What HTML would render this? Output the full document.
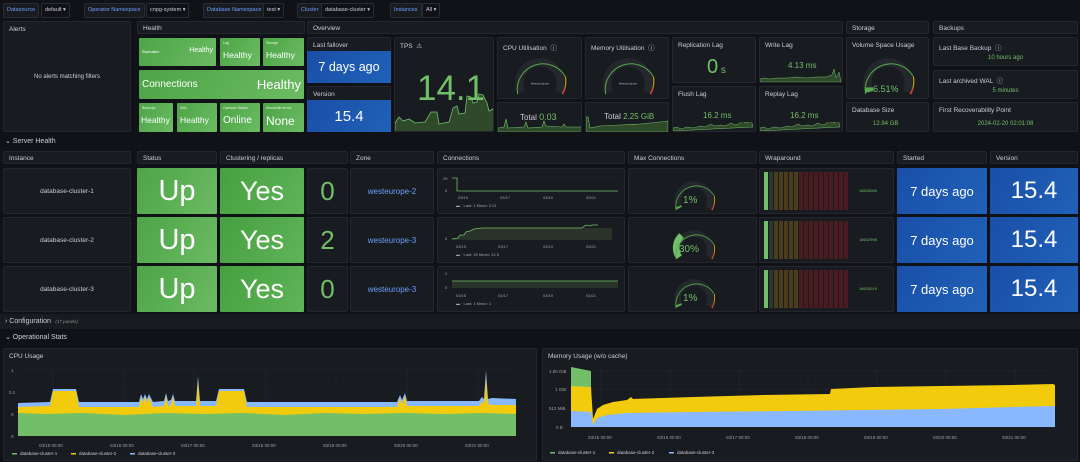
<!DOCTYPE html><html><head><meta charset="utf-8"><style>
*{box-sizing:border-box;margin:0;padding:0}
body{width:1080px;height:462px;background:#111217;font-family:"Liberation Sans",sans-serif;color:#ccccdc;position:relative;overflow:hidden}
.a{position:absolute}
.p{position:absolute;background:#181b1f;border:1px solid #24272d;border-radius:2px}
.t{position:absolute;left:5px;top:4px;font-size:6.5px;color:#ccccdc;white-space:nowrap}
.var{position:absolute;top:3px;height:15px;font-size:5.5px;line-height:13px;border:1px solid #2a2d33;border-radius:2px;padding:0 3px;white-space:nowrap}
.vl{color:#6e9fff;background:#181b1f}
.vv{color:#ccccdc;background:#111217}
.g{position:absolute;background:linear-gradient(120deg,#4da446,#6bbb62);color:#fff;border-radius:1px}
.b{position:absolute;background:linear-gradient(120deg,#1a4fa8,#2061b8);color:#fff;display:flex;align-items:center;justify-content:center}
.gt{position:absolute;left:3px;top:3px;font-size:3.5px;color:#e8f5e6}
.c{display:flex;align-items:center;justify-content:center}
.grn{color:#73bf69}
.row{position:absolute;left:0;width:1080px;font-size:7px;color:#ccccdc;padding-left:5px}
</style></head><body>

<div class="var vl" style="left:3px">Datasource</div><div class="var vv" style="left:41px">default ▾</div>
<div class="var vl" style="left:84px">Operator Namespace</div><div class="var vv" style="left:146px">cnpg-system ▾</div>
<div class="var vl" style="left:203px">Database Namespace</div><div class="var vv" style="left:263px">test ▾</div>
<div class="var vl" style="left:297px">Cluster</div><div class="var vv" style="left:321px">database-cluster ▾</div>
<div class="var vl" style="left:390px">Instances</div><div class="var vv" style="left:422px">All ▾</div>

<div class="p" style="left:3px;top:21px;width:128px;height:111px"><div class="t">Alerts</div><div class="a c" style="left:0;top:0;width:126px;height:109px;font-size:6px">No alerts matching filters</div></div>

<div class="p" style="left:137px;top:21px;width:168px;height:13px"><div class="t" style="top:3px">Health</div></div>
<div class="g" style="left:139px;top:38px;width:77px;height:28px"><span class="a" style="left:3px;top:12px;font-size:3.5px">Replication</span><span class="a" style="right:3px;top:9px;font-size:7px">Healthy</span></div>
<div class="g" style="left:220px;top:38px;width:40px;height:28px"><span class="gt">Lag</span><span class="a" style="left:3px;top:12px;font-size:8.5px">Healthy</span></div>
<div class="g" style="left:263px;top:38px;width:41px;height:28px"><span class="gt">Storage</span><span class="a" style="left:3px;top:12px;font-size:8.5px">Healthy</span></div>
<div class="g" style="left:139px;top:70px;width:165px;height:29px"><span class="a" style="left:3px;top:9px;font-size:10px">Connections</span><span class="a" style="right:3px;top:7px;font-size:13px">Healthy</span></div>
<div class="g" style="left:139px;top:103px;width:34px;height:29px"><span class="gt">Backups</span><span class="a" style="left:2px;top:12px;font-size:8.5px">Healthy</span></div>
<div class="g" style="left:177px;top:103px;width:40px;height:29px"><span class="gt">WAL</span><span class="a" style="left:3px;top:12px;font-size:8.5px">Healthy</span></div>
<div class="g" style="left:220px;top:103px;width:40px;height:29px"><span class="gt">Operator Status</span><span class="a" style="left:3px;top:12px;font-size:10px">Online</span></div>
<div class="g" style="left:263px;top:103px;width:41px;height:29px"><span class="gt">Reconcile errors</span><span class="a" style="left:3px;top:11px;font-size:12px">None</span></div>

<div class="p" style="left:307px;top:21px;width:536px;height:13px"><div class="t" style="top:3px">Overview</div></div>
<div class="p" style="left:307px;top:37px;width:84px;height:46px"><div class="t">Last fallover</div></div>
<div class="b" style="left:307px;top:51px;width:84px;height:32px;font-size:12.5px">7 days ago</div>
<div class="p" style="left:307px;top:86px;width:84px;height:46px"><div class="t">Version</div></div>
<div class="b" style="left:307px;top:100px;width:84px;height:32px;font-size:15px">15.4</div>

<div class="p" style="left:394px;top:37px;width:100px;height:95px;overflow:hidden"><div class="t">TPS &nbsp;⚠</div>
<svg class="a" style="left:0;top:55px" width="98" height="39"><path d="M0 39V30l4-6 4 4 6-2 6 4 10-1 6-10h6l2 12 10-2 4-14 4-2 2 8 6-1 2-17 4 1 2 6 4-1 2-8 4 1 4 8 2 8 4-2 2 6 4-1v19z" fill="#2e4a2a" stroke="#73bf69" stroke-width=".8"/></svg>
<div class="a grn" style="left:22px;top:33px;font-size:35px;line-height:36px">14.1</div></div>

<div class="p" style="left:497px;top:37px;width:85px;height:62px"><div class="t">CPU Utilisation &nbsp;ⓘ</div>
<svg class="a" style="left:11px;top:12px" width="62" height="48" viewBox="0 0 60 46"><path d="M12 40.3A20 20 0 1 1 48 40.3" fill="none" stroke="#24272c" stroke-width="8"/><path d="M8.35 42.5A25 25 0 0 1 54.62 25.66" fill="none" stroke="#56a64b" stroke-width="1"/><path d="M54.62 25.66A25 25 0 0 1 54.15 36.47" fill="none" stroke="#e0b400" stroke-width="1"/><path d="M54.15 36.47A25 25 0 0 1 51.65 42.5" fill="none" stroke="#d44a3a" stroke-width="1.5"/><text x="30" y="33" font-size="2.5" fill="#bbb" text-anchor="middle">Missing request</text></svg></div>
<div class="p" style="left:497px;top:102px;width:85px;height:30px">
<svg class="a" style="left:0;top:12px" width="83" height="17"><path d="M0 17V13l6-1 2-8 2 9 16-1 2-5 2 6 14-1 2-6 2 5 16 1 2-3 2 3 17 0v5z" fill="#2e4a2a" stroke="#73bf69" stroke-width=".6"/></svg>
<div class="a" style="left:22px;top:9px;font-size:8px">Total <span class="grn" style="font-size:9px">0.03</span></div></div>

<div class="p" style="left:585px;top:37px;width:84px;height:62px"><div class="t">Memory Utilisation &nbsp;ⓘ</div>
<svg class="a" style="left:11px;top:12px" width="62" height="48" viewBox="0 0 60 46"><path d="M12 40.3A20 20 0 1 1 48 40.3" fill="none" stroke="#24272c" stroke-width="8"/><path d="M8.35 42.5A25 25 0 0 1 54.62 25.66" fill="none" stroke="#56a64b" stroke-width="1"/><path d="M54.62 25.66A25 25 0 0 1 54.15 36.47" fill="none" stroke="#e0b400" stroke-width="1"/><path d="M54.15 36.47A25 25 0 0 1 51.65 42.5" fill="none" stroke="#d44a3a" stroke-width="1.5"/><text x="30" y="33" font-size="2.5" fill="#bbb" text-anchor="middle">Missing request</text></svg></div>
<div class="p" style="left:585px;top:102px;width:84px;height:30px">
<svg class="a" style="left:0;top:10px" width="82" height="19"><path d="M0 19V4l2 0 2 11 10-2 20-1 20-1 20-2 8-1v11z" fill="#2e4a2a" stroke="#73bf69" stroke-width=".6"/></svg>
<div class="a" style="left:18px;top:9px;font-size:8px">Total <span class="grn" style="font-size:8px">2.25 GiB</span></div></div>

<div class="p" style="left:672px;top:37px;width:84px;height:46px"><div class="t">Replication Lag</div><div class="a grn" style="left:34px;top:18px;font-size:20px">0<span style="font-size:10px"> s</span></div></div>
<div class="p" style="left:672px;top:86px;width:84px;height:46px"><div class="t">Flush Lag</div><div class="a grn" style="left:30px;top:24px;font-size:8px">16.2 ms</div>
<svg class="a" style="left:0;top:35px" width="82" height="9"><path d="M0 9V6l4-1 4 2 6-2 6 1 8-2 4 1 6-3 4 2 6-1 4 1 6-3 4 2 4-1 4-6 2 5 4-1 2-3 2 8z" fill="#2e4a2a" stroke="#73bf69" stroke-width=".5"/></svg></div>
<div class="p" style="left:759px;top:37px;width:84px;height:46px"><div class="t">Write Lag</div><div class="a grn" style="left:28px;top:23px;font-size:8px">4.13 ms</div>
<svg class="a" style="left:0;top:30px" width="82" height="14"><path d="M0 14V11l4-1 6 1 8-1 10 0 8-1 10 1 10-1 10 0 6-2 2-6 2 9 3-6 2 10z" fill="#2e4a2a" stroke="#73bf69" stroke-width=".5"/></svg></div>
<div class="p" style="left:759px;top:86px;width:84px;height:46px"><div class="t">Replay Lag</div><div class="a grn" style="left:30px;top:24px;font-size:8px">16.2 ms</div>
<svg class="a" style="left:0;top:35px" width="82" height="9"><path d="M0 9V6l4-1 4 2 6-2 6 1 8-2 4 1 6-3 4 2 6-1 4 1 6-3 4 2 4-1 4-6 2 5 4-1 2-3 2 8z" fill="#2e4a2a" stroke="#73bf69" stroke-width=".5"/></svg></div>

<div class="p" style="left:846px;top:21px;width:83px;height:13px"><div class="t" style="top:3px">Storage</div></div>
<div class="p" style="left:846px;top:37px;width:83px;height:62px"><div class="t">Volume Space Usage</div>
<svg class="a" style="left:10px;top:12px" width="62" height="48" viewBox="0 0 60 46"><path d="M12 40.3A20 20 0 1 1 48 40.3" fill="none" stroke="#24272c" stroke-width="8"/><path d="M12 40.3A20 20 0 0 1 11.5 36" fill="none" stroke="#56a64b" stroke-width="8"/><path d="M8.35 42.5A25 25 0 0 1 54.62 25.66" fill="none" stroke="#56a64b" stroke-width="1"/><path d="M54.62 25.66A25 25 0 0 1 54.15 36.47" fill="none" stroke="#e0b400" stroke-width="1"/><path d="M54.15 36.47A25 25 0 0 1 51.65 42.5" fill="none" stroke="#d44a3a" stroke-width="1.5"/></svg>
<div class="a grn" style="left:26px;top:46px;font-size:9px">6.51%</div></div>
<div class="p" style="left:846px;top:102px;width:83px;height:30px"><div class="t">Database Size</div><div class="a grn" style="left:26px;top:18px;font-size:6px">12.94 GB</div></div>

<div class="p" style="left:933px;top:21px;width:145px;height:13px"><div class="t" style="top:3px">Backups</div></div>
<div class="p" style="left:933px;top:37px;width:145px;height:29px"><div class="t">Last Base Backup &nbsp;ⓘ</div><div class="a grn" style="left:0;width:143px;text-align:center;top:17px;font-size:6px">10 hours ago</div></div>
<div class="p" style="left:933px;top:70px;width:145px;height:29px"><div class="t">Last archived WAL &nbsp;ⓘ</div><div class="a grn" style="left:0;width:143px;text-align:center;top:17px;font-size:6px">5 minutes</div></div>
<div class="p" style="left:933px;top:102px;width:145px;height:30px"><div class="t">First Recoverability Point</div><div class="a grn" style="left:0;width:143px;text-align:center;top:18px;font-size:6px">2024-02-20 02:01:08</div></div>

<div class="row" style="top:137px">⌄ Server Health</div>
<div class="p" style="left:3px;top:151px;width:128px;height:13px"><div class="t" style="top:3px">Instance</div></div>
<div class="p" style="left:137px;top:151px;width:80px;height:13px"><div class="t" style="top:3px">Status</div></div>
<div class="p" style="left:220px;top:151px;width:128px;height:13px"><div class="t" style="top:3px">Clustering / replicas</div></div>
<div class="p" style="left:350px;top:151px;width:84px;height:13px"><div class="t" style="top:3px">Zone</div></div>
<div class="p" style="left:437px;top:151px;width:188px;height:13px"><div class="t" style="top:3px">Connections</div></div>
<div class="p" style="left:628px;top:151px;width:129px;height:13px"><div class="t" style="top:3px">Max Connections</div></div>
<div class="p" style="left:759px;top:151px;width:135px;height:13px"><div class="t" style="top:3px">Wraparound</div></div>
<div class="p" style="left:897px;top:151px;width:90px;height:13px"><div class="t" style="top:3px">Started</div></div>
<div class="p" style="left:990px;top:151px;width:88px;height:13px"><div class="t" style="top:3px">Version</div></div>

<!-- row 1 -->
<div class="p c" style="left:3px;top:168px;width:128px;height:46px;font-size:6.5px">database-cluster-1</div>
<div class="g c" style="left:137px;top:168px;width:80px;height:46px;font-size:29px">Up</div>
<div class="g c" style="left:220px;top:168px;width:84px;height:46px;font-size:27px;background:linear-gradient(120deg,#46a040,#5fb457)">Yes</div>
<div class="p c grn" style="left:307px;top:168px;width:41px;height:46px;font-size:26px">0</div>
<div class="p c" style="left:350px;top:168px;width:84px;height:46px;font-size:8px;color:#6e9fff">westeurope-2</div>
<div class="p" style="left:437px;top:168px;width:188px;height:46px"><svg width="186" height="44"><text x="5" y="11" font-size="4" fill="#9fa0a6">25</text><text x="7" y="23" font-size="4" fill="#9fa0a6">0</text><line x1="14" y1="9" x2="180" y2="9" stroke="#262930" stroke-width=".5"/><line x1="14" y1="22" x2="180" y2="22" stroke="#262930" stroke-width=".5"/><path d="M14 9H19V22H180" fill="none" stroke="#73bf69" stroke-width=".8"/><g font-size="4" fill="#9fa0a6"><text x="20" y="30">03/15</text><text x="62" y="30">03/17</text><text x="105" y="30">03/19</text><text x="148" y="30">03/21</text><text x="18" y="38">▬ · Last: 1  Mean: 2.01</text></g></svg></div>
<div class="p" style="left:628px;top:168px;width:129px;height:46px"><svg class="a" style="left:40px;top:6px" width="50" height="38" viewBox="0 0 60 46"><path d="M12 40.3A20 20 0 1 1 48 40.3" fill="none" stroke="#24272c" stroke-width="8"/><path d="M12 40.3A20 20 0 0 1 11 38" fill="none" stroke="#56a64b" stroke-width="8"/><path d="M8.35 42.5A25 25 0 0 1 54.62 25.66" fill="none" stroke="#56a64b" stroke-width="1"/><path d="M54.62 25.66A25 25 0 0 1 54.15 36.47" fill="none" stroke="#e0b400" stroke-width="1"/><path d="M54.15 36.47A25 25 0 0 1 51.65 42.5" fill="none" stroke="#d44a3a" stroke-width="1.5"/></svg><div class="a grn" style="left:54px;top:26px;font-size:10px">1%</div></div>
<div class="p" style="left:759px;top:168px;width:135px;height:46px"><svg class="a" style="left:4px;top:3px" width="90" height="40"><rect x="0" width="4" height="38" fill="#73bf69"/><rect x="5" width="4" height="38" fill="#2f3530"/><g fill="#4b3d1c"><rect x="10" width="4" height="38"/><rect x="15" width="4" height="38"/><rect x="20" width="4" height="38"/><rect x="25" width="4" height="38"/><rect x="30" width="4" height="38"/></g><g fill="#4a1c20"><rect x="35" width="4" height="38"/><rect x="40" width="4" height="38"/><rect x="45" width="4" height="38"/><rect x="50" width="4" height="38"/><rect x="55" width="4" height="38"/><rect x="60" width="4" height="38"/><rect x="65" width="4" height="38"/><rect x="70" width="4" height="38"/><rect x="75" width="4" height="38"/><rect x="80" width="4" height="38"/></g></svg><div class="a grn" style="left:99px;top:19px;font-size:4px">18633065</div></div>
<div class="b" style="left:897px;top:168px;width:90px;height:46px;font-size:13px">7 days ago</div>
<div class="b" style="left:990px;top:168px;width:88px;height:46px;font-size:24px">15.4</div>

<!-- row 2 -->
<div class="p c" style="left:3px;top:217px;width:128px;height:46px;font-size:6.5px">database-cluster-2</div>
<div class="g c" style="left:137px;top:217px;width:80px;height:46px;font-size:29px">Up</div>
<div class="g c" style="left:220px;top:217px;width:84px;height:46px;font-size:27px;background:linear-gradient(120deg,#46a040,#5fb457)">Yes</div>
<div class="p c grn" style="left:307px;top:217px;width:41px;height:46px;font-size:26px">2</div>
<div class="p c" style="left:350px;top:217px;width:84px;height:46px;font-size:8px;color:#6e9fff">westeurope-3</div>
<div class="p" style="left:437px;top:217px;width:188px;height:46px"><svg width="186" height="44"><text x="7" y="22" font-size="4" fill="#9fa0a6">0</text><path d="M14 21l6-1 2-3h4l2-3 4-1 4-2 8-1h130v12H14z" fill="#2a3329"/><path d="M14 21l6-1 2-3h4l2-3 4-1 4-2 8-1h100l4-3 4 1 2-1h6" fill="none" stroke="#73bf69" stroke-width=".8"/><g font-size="4" fill="#9fa0a6"><text x="18" y="30">03/15</text><text x="60" y="30">03/17</text><text x="105" y="30">03/19</text><text x="148" y="30">03/21</text><text x="18" y="38">▬ · Last: 30  Mean: 24.5</text></g></svg></div>
<div class="p" style="left:628px;top:217px;width:129px;height:46px"><svg class="a" style="left:40px;top:6px" width="50" height="38" viewBox="0 0 60 46"><path d="M12 40.3A20 20 0 1 1 48 40.3" fill="none" stroke="#24272c" stroke-width="8"/><path d="M12 40.3A20 20 0 0 1 15 14" fill="none" stroke="#73bf69" stroke-width="8"/><path d="M8.35 42.5A25 25 0 0 1 54.62 25.66" fill="none" stroke="#56a64b" stroke-width="1"/><path d="M54.62 25.66A25 25 0 0 1 54.15 36.47" fill="none" stroke="#e0b400" stroke-width="1"/><path d="M54.15 36.47A25 25 0 0 1 51.65 42.5" fill="none" stroke="#d44a3a" stroke-width="1.5"/></svg><div class="a grn" style="left:50px;top:26px;font-size:10px">30%</div></div>
<div class="p" style="left:759px;top:217px;width:135px;height:46px"><svg class="a" style="left:4px;top:3px" width="90" height="40"><rect x="0" width="4" height="38" fill="#73bf69"/><rect x="5" width="4" height="38" fill="#2f3530"/><g fill="#4b3d1c"><rect x="10" width="4" height="38"/><rect x="15" width="4" height="38"/><rect x="20" width="4" height="38"/><rect x="25" width="4" height="38"/><rect x="30" width="4" height="38"/></g><g fill="#4a1c20"><rect x="35" width="4" height="38"/><rect x="40" width="4" height="38"/><rect x="45" width="4" height="38"/><rect x="50" width="4" height="38"/><rect x="55" width="4" height="38"/><rect x="60" width="4" height="38"/><rect x="65" width="4" height="38"/><rect x="70" width="4" height="38"/><rect x="75" width="4" height="38"/><rect x="80" width="4" height="38"/></g></svg><div class="a grn" style="left:99px;top:19px;font-size:4px">18632998</div></div>
<div class="b" style="left:897px;top:217px;width:90px;height:46px;font-size:13px">7 days ago</div>
<div class="b" style="left:990px;top:217px;width:88px;height:46px;font-size:24px">15.4</div>

<!-- row 3 -->
<div class="p c" style="left:3px;top:266px;width:128px;height:46px;font-size:6.5px">database-cluster-3</div>
<div class="g c" style="left:137px;top:266px;width:80px;height:46px;font-size:29px">Up</div>
<div class="g c" style="left:220px;top:266px;width:84px;height:46px;font-size:27px;background:linear-gradient(120deg,#46a040,#5fb457)">Yes</div>
<div class="p c grn" style="left:307px;top:266px;width:41px;height:46px;font-size:26px">0</div>
<div class="p c" style="left:350px;top:266px;width:84px;height:46px;font-size:8px;color:#6e9fff">westeurope-3</div>
<div class="p" style="left:437px;top:266px;width:188px;height:46px"><svg width="186" height="44"><text x="7" y="8" font-size="4" fill="#9fa0a6">2</text><text x="7" y="22" font-size="4" fill="#9fa0a6">0</text><rect x="14" y="14" width="166" height="7" fill="#2a3329"/><path d="M14 14H180" stroke="#73bf69" stroke-width=".8"/><g font-size="4" fill="#9fa0a6"><text x="18" y="30">03/15</text><text x="60" y="30">03/17</text><text x="105" y="30">03/19</text><text x="148" y="30">03/21</text><text x="18" y="38">▬ · Last: 1  Mean: 1</text></g></svg></div>
<div class="p" style="left:628px;top:266px;width:129px;height:46px"><svg class="a" style="left:40px;top:6px" width="50" height="38" viewBox="0 0 60 46"><path d="M12 40.3A20 20 0 1 1 48 40.3" fill="none" stroke="#24272c" stroke-width="8"/><path d="M12 40.3A20 20 0 0 1 11 38" fill="none" stroke="#56a64b" stroke-width="8"/><path d="M8.35 42.5A25 25 0 0 1 54.62 25.66" fill="none" stroke="#56a64b" stroke-width="1"/><path d="M54.62 25.66A25 25 0 0 1 54.15 36.47" fill="none" stroke="#e0b400" stroke-width="1"/><path d="M54.15 36.47A25 25 0 0 1 51.65 42.5" fill="none" stroke="#d44a3a" stroke-width="1.5"/></svg><div class="a grn" style="left:54px;top:26px;font-size:10px">1%</div></div>
<div class="p" style="left:759px;top:266px;width:135px;height:46px"><svg class="a" style="left:4px;top:3px" width="90" height="40"><rect x="0" width="4" height="38" fill="#73bf69"/><rect x="5" width="4" height="38" fill="#2f3530"/><g fill="#4b3d1c"><rect x="10" width="4" height="38"/><rect x="15" width="4" height="38"/><rect x="20" width="4" height="38"/><rect x="25" width="4" height="38"/><rect x="30" width="4" height="38"/></g><g fill="#4a1c20"><rect x="35" width="4" height="38"/><rect x="40" width="4" height="38"/><rect x="45" width="4" height="38"/><rect x="50" width="4" height="38"/><rect x="55" width="4" height="38"/><rect x="60" width="4" height="38"/><rect x="65" width="4" height="38"/><rect x="70" width="4" height="38"/><rect x="75" width="4" height="38"/><rect x="80" width="4" height="38"/></g></svg><div class="a grn" style="left:99px;top:19px;font-size:4px">18633019</div></div>
<div class="b" style="left:897px;top:266px;width:90px;height:46px;font-size:13px">7 days ago</div>
<div class="b" style="left:990px;top:266px;width:88px;height:46px;font-size:24px">15.4</div>

<div class="row" style="top:314px;height:15px;background:#181b1f;line-height:15px">› Configuration <span style="font-size:4.5px;color:#8e8e8e;font-style:italic">&nbsp;&nbsp;(17 panels)</span></div>
<div class="row" style="top:333px">⌄ Operational Stats</div>

<div class="p" style="left:3px;top:348px;width:534px;height:113px"><div class="t" style="top:4px">CPU Usage</div>
<svg class="a" style="left:0;top:0" width="532" height="111">
<g stroke="#25282e" stroke-width=".5"><line x1="14" y1="21" x2="512" y2="21"/><line x1="14" y1="43" x2="512" y2="43"/><line x1="14" y1="65" x2="512" y2="65"/><line x1="14" y1="87" x2="512" y2="87"/><line x1="49" y1="20" x2="49" y2="87"/><line x1="120" y1="20" x2="120" y2="87"/><line x1="190" y1="20" x2="190" y2="87"/><line x1="262" y1="20" x2="262" y2="87"/><line x1="332" y1="20" x2="332" y2="87"/><line x1="403" y1="20" x2="403" y2="87"/><line x1="474" y1="20" x2="474" y2="87"/></g>
<g font-size="4.5" fill="#9fa0a6"><text x="7" y="23">1</text><text x="5" y="45">0.1</text><text x="7" y="67">0</text><text x="7" y="89">0</text>
<text x="35" y="98">03/15 00:00</text><text x="106" y="98">03/16 00:00</text><text x="177" y="98">03/17 00:00</text><text x="248" y="98">03/18 00:00</text><text x="319" y="98">03/19 00:00</text><text x="390" y="98">03/20 00:00</text><text x="461" y="98">03/21 00:00</text></g>
<path d="M14 54L46 53L49 40L72 40L75 53L135 53L137 45L139 50L141 45L143 50L145 45L149 53L160 52L162 44L164 52L167 51L169 45L171 52L192 52L194 27L196 52L212 52L215 40L240 40L243 53L393 53L396 46L398 51L401 44L403 52L475 52L478 48L480 50L482 21L484 50L488 49L512 50V87H14Z" fill="#8ab8ff"/>
<path d="M14 58L46 57L49 42L72 42L75 58L135 58L137 48L139 54L141 48L143 54L145 48L149 58L160 57L162 47L164 57L167 56L169 48L171 57L192 57L194 32L196 57L212 57L215 42L240 42L243 58L393 58L396 49L398 55L401 47L403 57L475 57L478 52L480 55L482 30L484 55L488 56L512 56V87H14Z" fill="#f2cc0c"/>
<path d="M14 64L40 65L80 64L120 66L160 64L200 65L240 64L280 66L320 64L360 65L400 64L440 65L480 64L512 65V87H14Z" fill="#73bf69"/>
<g font-size="4.5" fill="#ccccdc"><rect x="8" y="104" width="5" height="1.5" fill="#73bf69"/><text x="16" y="106">database-cluster-1</text><rect x="67" y="104" width="5" height="1.5" fill="#f2cc0c"/><text x="75" y="106">database-cluster-2</text><rect x="126" y="104" width="5" height="1.5" fill="#8ab8ff"/><text x="134" y="106">database-cluster-3</text></g>
</svg></div>

<div class="p" style="left:542px;top:348px;width:536px;height:113px"><div class="t" style="top:4px">Memory Usage (w/o cache)</div>
<svg class="a" style="left:0;top:0" width="534" height="111">
<g stroke="#25282e" stroke-width=".5"><line x1="27" y1="22" x2="512" y2="22"/><line x1="27" y1="40" x2="512" y2="40"/><line x1="27" y1="59" x2="512" y2="59"/><line x1="27" y1="78" x2="512" y2="78"/><line x1="58" y1="20" x2="58" y2="78"/><line x1="127" y1="20" x2="127" y2="78"/><line x1="196" y1="20" x2="196" y2="78"/><line x1="265" y1="20" x2="265" y2="78"/><line x1="334" y1="20" x2="334" y2="78"/><line x1="403" y1="20" x2="403" y2="78"/><line x1="472" y1="20" x2="472" y2="78"/></g>
<g font-size="4.5" fill="#9fa0a6"><text x="6" y="24">1.50 GiB</text><text x="12" y="42">1 GiB</text><text x="6" y="61">512 MiB</text><text x="13" y="80">0 B</text>
<text x="45" y="90">03/15 00:00</text><text x="114" y="90">03/16 00:00</text><text x="183" y="90">03/17 00:00</text><text x="252" y="90">03/18 00:00</text><text x="321" y="90">03/19 00:00</text><text x="390" y="90">03/20 00:00</text><text x="459" y="90">03/21 00:00</text></g>
<path d="M28 18L48 22V78H28Z" fill="#73bf69"/>
<path d="M28 37L48 38L50 70L54 60L60 56L70 53L84 51L88 48L90 50L150 48L220 46L287 45L288 40L330 38L400 37L470 36L510 35L512 36V78H28Z" fill="#f2cc0c"/>
<path d="M28 62L48 63L50 76L54 69L64 66L84 64L150 63L250 62L320 61L400 60L470 58L512 57V78H28Z" fill="#8ab8ff"/>
<g font-size="4.5" fill="#ccccdc"><rect x="7" y="103" width="5" height="1.5" fill="#73bf69"/><text x="15" y="105">database-cluster-1</text><rect x="66" y="103" width="5" height="1.5" fill="#f2cc0c"/><text x="74" y="105">database-cluster-2</text><rect x="126" y="103" width="5" height="1.5" fill="#8ab8ff"/><text x="134" y="105">database-cluster-3</text></g>
</svg></div>
</body></html>
